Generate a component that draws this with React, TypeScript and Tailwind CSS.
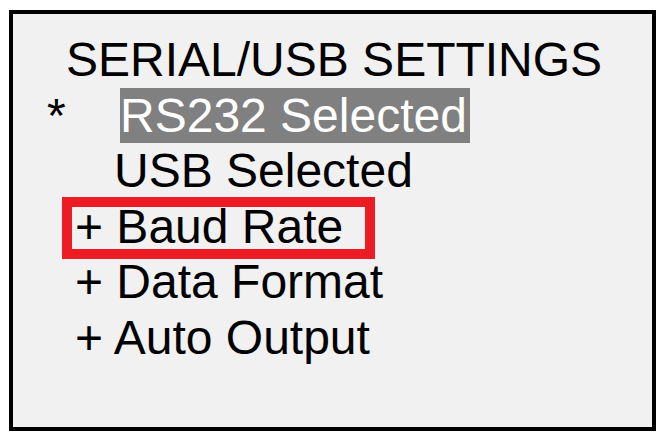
export default function App() {
  return (
    <div
      className="w-[663px] h-[441px] bg-white pl-[9px] pt-[10px]"
      style={{ fontFamily: '"Liberation Sans", Arial, sans-serif' }}
    >
      <div className="w-[647px] h-[421px] border-4 border-black bg-[#f1f1f1] pt-[18px] text-[48px] leading-[55.5px] text-black">
        <div className="pl-[53px] whitespace-nowrap">SERIAL/USB SETTINGS</div>

        <div className="flex items-center pl-[34px] whitespace-nowrap">
          <span className="w-[73px]">*</span>
          <span className="bg-[#808080] text-white pr-[3px]">RS232 Selected</span>
        </div>

        <div className="pl-[101px] whitespace-nowrap">USB Selected</div>

        {/* highlighted menu entry */}
        <div className="relative pl-[62px] whitespace-nowrap">
          + Baud Rate
          <span className="absolute left-[49px] top-[-2px] w-[313px] h-[62px] border-[10px] border-[#ed1c24]" />
        </div>

        <div className="pl-[62px] whitespace-nowrap">+ Data Format</div>
        <div className="pl-[62px] whitespace-nowrap">+ Auto Output</div>
      </div>
    </div>
  );
}
